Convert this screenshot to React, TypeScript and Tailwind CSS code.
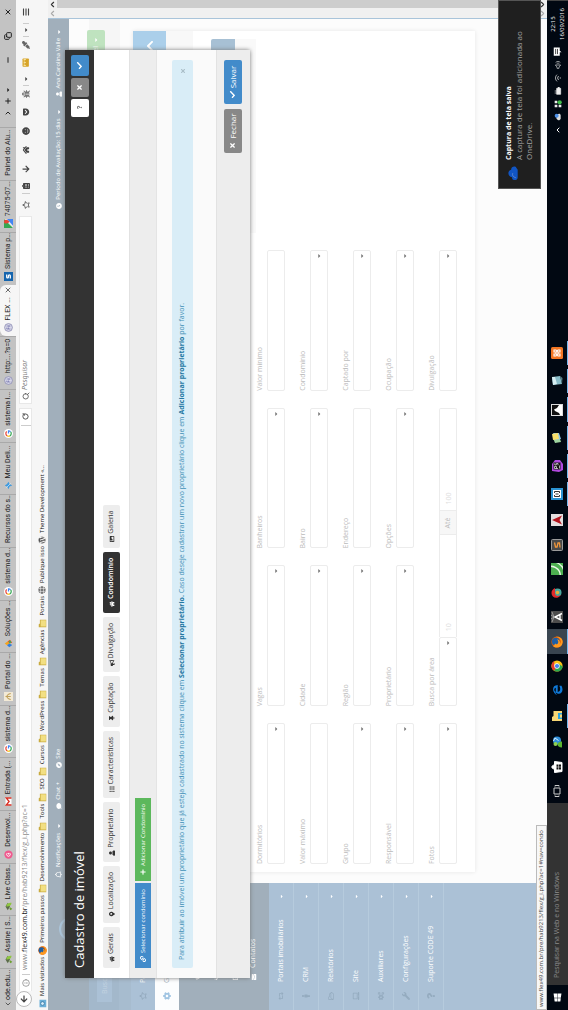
import type { ReactNode } from "react";
import {
  FaBullhorn, FaCaretDown, FaCheck, FaChevronUp, FaClock, FaCog, FaCogs, FaComment, FaCompass,
  FaEnvelope, FaExternalLinkAlt, FaGlobe, FaHome, FaImage, FaLaptop, FaLink, FaList,
  FaMapMarkerAlt, FaPlus, FaQuestion, FaRegBell, FaRegFolderOpen, FaRegStar, FaRetweet, FaThumbtack,
  FaTimes, FaUser, FaUsers, FaWindows, FaWordpress, FaWrench, FaEyeDropper, FaBug, FaGetPocket,
  FaSmile, FaArrowDown, FaArrowLeft, FaClipboardList, FaBars, FaMale,
} from "react-icons/fa";
import { ChevronDown, ChevronLeft, ChevronUp, Copy, Info, Minus, Plus, RotateCw, Search, X } from "lucide-react";

function Svg({ children, size = "size-3" }: { children: ReactNode; size?: string }) {
  return <svg viewBox="0 0 12 12" className={`${size} shrink-0`} aria-hidden="true">{children}</svg>;
}

const GoogleIcon = () => (
  <Svg size="size-[9px]">
    <circle cx="6" cy="6" r="6" fill="#fff" />
    <path d="M8.6 3.6A3.6 3.6 0 0 0 2.8 4.4" stroke="#ea4335" strokeWidth="1.6" fill="none" />
    <path d="M2.8 4.4a3.6 3.6 0 0 0 0 3.4" stroke="#fbbc05" strokeWidth="1.6" fill="none" />
    <path d="M2.8 7.8a3.6 3.6 0 0 0 5.6 .9" stroke="#34a853" strokeWidth="1.6" fill="none" />
    <path d="M6 6h3.6a3.6 3.6 0 0 1-1.2 2.7" stroke="#4285f4" strokeWidth="1.6" fill="none" />
  </Svg>
);
const GmailIcon = () => (
  <Svg size="size-[9px]">
    <rect x="0.5" y="2" width="11" height="8" fill="#fff" />
    <path d="M1.3 10V3l4.7 3.8L10.7 3v7" stroke="#d93025" strokeWidth="1.8" fill="none" />
  </Svg>
);
const LeafIcon = () => (
  <Svg size="size-[9px]">
    <path d="M1 5 6 2l5 3-5 3Z" fill="#5b6b4a" />
    <path d="M6 3c4 0 5 3 5 7-3 0-5-2-5-7Z" fill="#8ec63f" />
    <path d="M1 9c1-2 3-2 4-1l-2 3Z" fill="#6ba02f" />
  </Svg>
);
const PinkIcon = () => (
  <Svg size="size-[9px]">
    <circle cx="6" cy="6" r="5.5" fill="#ef5a8e" />
    <path d="M8 4.5a2.4 2.4 0 1 0 .2 2.6M6 6h2" stroke="#fff" strokeWidth="1.2" fill="none" />
  </Svg>
);
const PortalIcon = () => (
  <Svg size="size-[9px]">
    <rect width="12" height="12" fill="#f3ead6" />
    <path d="M2 9c1-4 2-5 4-5s3 1 4 5M6 2v7" stroke="#c2a25c" strokeWidth="1.4" fill="none" />
  </Svg>
);
const DropIcon = () => (
  <Svg size="size-[9px]">
    <path d="M6 1 9 5 6 7 3.6 4Z" fill="#f4a51c" />
    <path d="M3.6 4 6 7 4 11 1 7Z" fill="#2f7de0" />
    <path d="M9 5l2 3-4 3-1-4Z" fill="#e2532f" />
    <circle cx="8" cy="8" r="1.6" fill="#4bab4f" />
  </Svg>
);
const BirdIcon = () => (
  <Svg size="size-[9px]">
    <path d="M6 1 8 4l3 2-3 1.4L6 11 4.6 7.4 1 6l3.4-1.6Z" fill="#3f9be0" />
    <path d="M3 3l6 6" stroke="#d9eefc" strokeWidth="0.9" />
  </Svg>
);
const FlexIcon = () => (
  <Svg size="size-[9px]">
    <circle cx="6" cy="6" r="5.2" fill="#d9d9ea" stroke="#8585ae" />
    <path d="M4 3.6v5M4 3.8h2M4 6h2M8 3.4v5.2M6.6 6.6h2.2" stroke="#7777ad" strokeWidth="1" fill="none" />
  </Svg>
);
const SIcon = () => (
  <Svg size="size-[9px]">
    <rect width="12" height="12" fill="#1565ae" />
    <path d="M8.6 3.6H5.2a1.1 1.1 0 0 0 0 2.3h1.8a1.2 1.2 0 0 1 0 2.5H3.4" stroke="#fff" strokeWidth="1.7" fill="none" />
  </Svg>
);
const MapsIcon = () => (
  <Svg size="size-[9px]">
    <rect width="12" height="12" fill="#34a853" />
    <path d="M0 12 12 0v12Z" fill="#e8e8e8" />
    <path d="M3 12 12 4v8Z" fill="#4285f4" />
    <path d="M8.5 0a2.6 2.6 0 0 1 2.6 3C11 5 8.5 7.500 8.500 7.500S6 5 6 3a2.600 2.600 0 0 1 2.500-3Z" fill="#ea4335" />
  </Svg>
);
const ChromeIcon = ({ size = "size-[12px]" }: { size?: string }) => (
  <Svg size={size}>
    <circle cx="6" cy="6" r="5.600" fill="#fbc116" />
    <path d="M6 6 1.200 3.200A5.600 5.600 0 0 1 10.900 3.200H6Z" fill="#e33b2e" />
    <path d="M6 6 1.200 3.200A5.600 5.600 0 0 0 5.600 11.600L8.400 7.400Z" fill="#2da94f" />
    <circle cx="6" cy="6" r="2.700" fill="#fff" />
    <circle cx="6" cy="6" r="2.100" fill="#4583ef" />
  </Svg>
);
const FirefoxIcon = ({ size = "size-[12px]" }: { size?: string }) => (
  <Svg size={size}>
    <circle cx="6" cy="6" r="5.600" fill="#e66000" />
    <circle cx="6.400" cy="4.800" r="3.900" fill="#1d5fa6" />
    <path d="M.6 4.500C1.200 2.600 2 2 2 2s.2 1 .8 1.300c1 .1 1.500.5 1.800 1.200-.8.100-1.200 1-.6 1.900 1 1.500 3.800 1 4.400-.6C9 8.500 5.500 10 3.400 8.400c2.600 3 7.600 1 7.600-3.900 1.200 4-1.400 7.200-5 7.200A5.700 5.700 0 0 1 .6 4.500Z" fill="#ff9a1f" />
  </Svg>
);
const Folder = () => (
  <Svg size="size-[9px]">
    <path d="M1 1h4l1 1.500h5V11H1Z" fill="#c9ab3f" />
    <path d="M2 3.500h8.500v7H2Z" fill="#f2df83" />
  </Svg>
);

const tabs: { icon?: ReactNode; text: string; active?: boolean }[] = [
  { icon: <LeafIcon />, text: "Assine | S..." },
  { icon: <LeafIcon />, text: "Live Class..." },
  { icon: <PinkIcon />, text: "Desenvol..." },
  { icon: <GmailIcon />, text: "Entrada (..." },
  { icon: <GoogleIcon />, text: "sistema d..." },
  { icon: <PortalIcon />, text: "Portal do ..." },
  { icon: <DropIcon />, text: "Soluções ..." },
  { icon: <GoogleIcon />, text: "sistema d..." },
  { text: "Recursos do s..." },
  { icon: <BirdIcon />, text: "Meu Deli..." },
  { icon: <GoogleIcon />, text: "sistema i..." },
  { icon: <FlexIcon />, text: "http:...?s=0" },
  { icon: <FlexIcon />, text: "FLEX ...", active: true },
  { icon: <SIcon />, text: "Sistema p..." },
  { icon: <MapsIcon />, text: "74075-07..." },
  { text: "Painel do Alu..." },
];

function TabStrip() {
  return (
    <div className="flex h-4 shrink-0 items-stretch bg-[#c3c3c3] font-['Roboto','Noto_Sans',sans-serif] text-[7px] text-[#222]">
      <div className="flex w-[42px] shrink-0 items-center justify-between border-r border-[#a9a9a9] pr-1 pl-0.5">
        <button aria-label="Rolar abas para trás"><ChevronLeft className="size-2" /></button>
        <span className="whitespace-nowrap">ode.edu...</span>
      </div>
      {tabs.map((t, i) => (
        <button
          key={i}
          className={
            t.active
              ? "flex min-w-0 flex-1 items-center gap-[3px] overflow-hidden rounded-t-md bg-[#f6f6f6] pl-1 text-left whitespace-nowrap"
              : "flex min-w-0 flex-1 items-center gap-[3px] overflow-hidden border-r border-[#a9a9a9] pl-1 text-left whitespace-nowrap"
          }
        >
          {t.icon}
          <span>{t.text}</span>
          {t.active && <X className="mr-1 ml-auto size-2 shrink-0" strokeWidth={2} />}
        </button>
      ))}
      <div className="flex w-[127px] shrink-0 items-center">
        <div className="flex items-center gap-1 pl-2.5">
          <button aria-label="Rolar abas"><ChevronLeft className="size-2 rotate-180" strokeWidth={3} /></button>
          <button aria-label="Nova aba"><Plus className="size-2" strokeWidth={3} /></button>
          <button aria-label="Listar abas"><FaCaretDown className="size-1.5" /></button>
        </div>
        <div className="ml-auto flex items-center gap-4 pr-2">
          <button aria-label="Minimizar"><Minus className="size-2" strokeWidth={3} /></button>
          <button aria-label="Restaurar"><Copy className="size-2" strokeWidth={3} /></button>
          <button aria-label="Fechar janela"><X className="size-2" strokeWidth={3} /></button>
        </div>
      </div>
    </div>
  );
}

function NavBar() {
  return (
    <div className="flex h-4 shrink-0 items-center bg-[#f6f6f6] text-[7px] text-[#444]">
      <button aria-label="Voltar" className="z-10 ml-[3px] flex size-4 shrink-0 items-center justify-center rounded-full border border-[#bbb] bg-white">
        <FaArrowLeft className="size-2" />
      </button>
      <div className="mt-[3px] flex h-[13px] min-w-0 flex-1 items-center border border-l-0 border-[#e8e8e8] bg-white pl-1">
        <Info className="size-2 shrink-0 text-[#777]" />
        <div className="ml-1 h-2 border-l border-[#ccc]" />
        <div className="ml-1 flex-1 whitespace-nowrap text-[#8a8a8a]">
          www.<span className="text-[#222]">flex49.com.br</span>/pre/hab9213/flex/g_i.php?ac=1
        </div>
        <button aria-label="Recarregar" className="flex h-2.5 w-[17px] items-center justify-center border-l border-[#ccc]">
          <RotateCw className="size-[7px]" strokeWidth={3} />
        </button>
      </div>
      <label className="mt-[3px] ml-1 flex h-[13px] w-[188px] shrink-0 items-center gap-0.5 border border-[#e8e8e8] bg-white pl-[3px]">
        <Search className="size-2 shrink-0 text-[#555]" strokeWidth={2.5} />
        <input placeholder="Pesquisar" aria-label="Pesquisar" className="w-full min-w-0 bg-transparent italic outline-none placeholder:text-[#777]" />
      </label>
      <div className="flex w-[216px] shrink-0 items-center pt-[3px] pl-[7px]">
        <button aria-label="Favoritar" className="w-[15px]"><FaRegStar className="size-2" /></button>
        <button aria-label="Favoritos" className="flex w-[15px] justify-center border-l border-[#ccc]"><FaClipboardList className="size-2" /></button>
        <button aria-label="Downloads" className="flex w-[19px] justify-center"><FaArrowDown className="size-2" /></button>
        <button aria-label="Início" className="flex w-[19px] justify-center"><FaHome className="size-2" /></button>
        <button aria-label="Conversar" className="flex w-[19px] justify-center"><FaSmile className="size-2" /></button>
        <button aria-label="Pocket" className="flex w-[19px] justify-center"><FaGetPocket className="size-2" /></button>
        <button aria-label="Depurar" className="flex w-[17px] justify-center"><FaBug className="size-2 text-[#777]" /></button>
        <button aria-label="Opções de depuração" className="flex w-[13px] justify-center border-l border-[#ccc]"><FaCaretDown className="size-1.5" /></button>
        <button aria-label="Medir" className="flex w-[20px] justify-center">
          <Svg size="size-[9px]"><rect x="0.500" y="2" width="11" height="8.500" rx="1" fill="#d7a428" /><path d="M2 3.500v3M4 3.500v2M6 3.500v3M8 3.500v2M10 3.500v3" stroke="#fff3c0" /></Svg>
        </button>
        <button aria-label="Conta-gotas" className="flex w-[16px] justify-center"><FaEyeDropper className="size-2 text-[#666]" /></button>
        <button aria-label="Opções de cor" className="flex w-[14px] justify-center border-x border-[#ccc]"><FaCaretDown className="size-1.5" /></button>
        <button aria-label="Menu" className="flex w-[22px] justify-center"><FaBars className="size-2" /></button>
      </div>
    </div>
  );
}

const bookmarks: { icon: ReactNode; text: string }[] = [
  { icon: <Svg size="size-[9px]"><path d="M1 2h10v9H1Z" fill="#6cb0d8" /><circle cx="6" cy="6" r="2.500" fill="#d9eefa" stroke="#2f6f9c" /></Svg>, text: "Mais visitados" },
  { icon: <FirefoxIcon size="size-[9px]" />, text: "Primeiros passos" },
  { icon: <Folder />, text: "Desenvolvimento" },
  { icon: <Folder />, text: "Tools" },
  { icon: <Folder />, text: "SEO" },
  { icon: <Folder />, text: "Cursos" },
  { icon: <Folder />, text: "WordPress" },
  { icon: <Folder />, text: "Temas" },
  { icon: <Folder />, text: "Agências" },
  { icon: <Folder />, text: "Portais" },
  { icon: <FaGlobe className="size-[8px] text-[#777]" />, text: "Publique isso" },
  { icon: <FaWordpress className="size-[8px] text-[#555]" />, text: "Theme Development «..." },
];

function BookmarkBar() {
  return (
    <div className="flex h-4 shrink-0 items-center gap-[2px] bg-[#f6f6f6] pt-1 pl-0.5 text-[6px] font-medium text-[#111]">
      {bookmarks.map((b) => (
        <a key={b.text} href="#" className="flex items-center gap-[3px] whitespace-nowrap">{b.icon}{b.text}</a>
      ))}
    </div>
  );
}

const menu = [
  { icon: <FaRetweet />, text: "Portais imobiliários" },
  { icon: <FaMale />, text: "CRM" },
  { icon: <FaRegFolderOpen />, text: "Relatórios" },
  { icon: <FaLaptop />, text: "Site" },
  { icon: <FaCogs />, text: "Auxiliares" },
  { icon: <FaWrench />, text: "Configurações" },
  { icon: <FaQuestion />, text: "Suporte CODE 49" },
];

function Sidebar() {
  return (
    <nav className="flex w-[127px] shrink-0 flex-col bg-[#abc1d6] text-[7px] font-medium text-white">
      <div className="flex h-[41px] shrink-0 justify-center bg-[#a1afbb] pt-[11px] pl-[34px]">
        <div className="size-6 rounded-full border-2 border-[#abc4d9]" />
      </div>
      <div className="h-[30px] shrink-0 bg-[#a3b8cb] px-2 pt-2">
        <input placeholder="Busca" aria-label="Busca" className="h-[15px] w-full bg-[#abc1d6] px-2 font-normal placeholder:text-[#c3d3e1]" />
      </div>
      <div className="h-3 shrink-0 bg-[#a7bccf]" />
      <a href="#" className="flex h-6 shrink-0 items-center gap-[9px] pl-[10px]"><FaRegStar className="size-2 text-[#8fa5b9]" />Painel</a>
      <a href="#" className="flex h-6 shrink-0 items-center gap-[9px] bg-[#fcfdfe] pl-[10px] text-[#a1afbb]"><FaCog className="size-2 text-[#a0c4e2]" />Gestão</a>
      <div className="flex h-[90px] shrink-0 flex-col justify-end bg-[#a1afbb] pb-[6px] pl-[30px]">
        <a href="#" className="flex h-[19px] items-center gap-1"><FaHome className="size-[6px]" />Imóveis</a>
        <a href="#" className="flex h-[19px] items-center gap-1"><FaUsers className="size-[6px]" />Clientes</a>
        <a href="#" className="flex h-[19px] items-center gap-1"><FaExternalLinkAlt className="size-[6px]" />Agenda</a>
        <a href="#" className="flex h-[19px] items-center gap-[6px]"><FaEnvelope className="size-[6px]" />Contatos</a>
      </div>
      {menu.map((m) => (
        <a key={m.text} href="#" className="flex h-[25px] shrink-0 items-center border-b border-[#b6cbdd] pr-[11px] pl-[10px]">
          <span className="w-[18px] text-[8px] text-[#94abbf]">{m.icon}</span>
          <span className="flex-1 whitespace-nowrap">{m.text}</span>
          <FaCaretDown className="size-[5px]" />
        </a>
      ))}
    </nav>
  );
}

function Field({ id, label, select = true }: { id: string; label: string; select?: boolean }) {
  return (
    <div className="flex flex-col">
      <label htmlFor={id} className="h-[13px] leading-[11px] whitespace-nowrap">{label}</label>
      <div className="flex">{select ? <Picker id={id} /> : <input id={id} className="h-[18px] w-full min-w-0 rounded-xs border border-[#ececec] bg-white" />}</div>
    </div>
  );
}

function Picker({ id }: { id: string }) {
  return (
    <span className="relative block h-[18px] w-full">
      <select id={id} className="block h-full w-full appearance-none rounded-xs border border-[#ececec] bg-white"><option></option></select>
      <FaCaretDown className="pointer-events-none absolute top-[6px] right-[3px] size-[6px] text-[#777]" />
    </span>
  );
}

const fields: [string, boolean][] = [
  ["Dormitórios", true], ["Vagas", true], ["Banheiros", true], ["Valor mínimo", false],
  ["Valor máximo", false], ["Cidade", true], ["Bairro", true], ["Condomínio", true],
  ["Grupo", true], ["Região", true], ["Endereço", false], ["Captado por", true],
  ["Responsável", true], ["Proprietário", true], ["Opções", true], ["Ocupação", true],
  ["Fotos", true],
];

function Main() {
  return (
    <div className="flex min-w-0 flex-1 flex-col bg-[#fcfcfc] text-[7px]">
      <header className="flex h-[21px] shrink-0 items-center justify-between bg-[#a1afbb] pr-[10px] pl-[5px] text-[6px] font-medium text-white">
        <div className="flex items-center gap-[14px]">
          <a href="#" className="flex items-center gap-1"><FaRegBell className="size-[7px]" />Notificações <FaCaretDown className="size-[6px]" /></a>
          <a href="#" className="flex items-center gap-[3px]"><FaComment className="size-[6px]" />Chat +</a>
          <a href="#" className="flex items-center gap-[3px]"><FaCompass className="size-[6px]" />Site</a>
        </div>
        <div className="flex items-center gap-3">
          <a href="#" className="flex items-center gap-[3px]"><FaClock className="size-[6px]" />Período de Avaliação: 15 dias <FaCaretDown className="size-[6px]" /></a>
          <a href="#" className="flex items-center gap-[3px]"><FaUser className="size-[6px]" />Ana Carolina Valle <FaCaretDown className="size-[6px]" /></a>
        </div>
      </header>
      <div className="h-5 shrink-0" />
      <div className="flex h-[31px] shrink-0 items-start justify-end bg-[#f6f6f6] pr-[11px]">
        <button className="-mt-0.5 flex h-[18px] items-center gap-[3px] rounded-xs bg-[#bfe3bf] px-[7px] text-white">Painel <FaCaretDown className="size-[6px]" /></button>
      </div>
      <div className="h-[13px] shrink-0" />
      <section className="mr-3 ml-[11px] bg-white pb-[18px] shadow-[0_0_4px_#e6e6e6]">
        <div className="flex h-[33px] justify-end bg-[#fdfdfd]">
          <button aria-label="Recolher" className="flex w-9 items-center justify-end bg-[#abcfea] pr-[9px] text-white"><FaChevronUp className="size-3" /></button>
        </div>
        <div className="h-[27px] bg-[#f8f8f8]" />
        <div className="flex gap-[17px] px-2">
          <div className="grid min-w-0 flex-1 grid-cols-4 gap-x-[17px] gap-y-3 pt-[61px] text-[#bbb]">
            {fields.map(([label, select]) => <Field key={label} id={label} label={label} select={select} />)}
            <div className="col-span-2 flex flex-col">
              <label htmlFor="area" className="h-[13px] leading-[11px]">Busca por área</label>
              <div className="flex">
                <div className="w-[69px]"><Picker id="area" /></div>
                <input aria-label="Área mínima" placeholder="10" className="h-[18px] min-w-0 flex-1 border-y border-[#ececec] px-[6px] placeholder:text-[#dedede]" />
                <span className="flex h-[18px] w-[25px] items-center justify-center border border-[#ececec] bg-[#f7f7f7]">Até</span>
                <input aria-label="Área máxima" placeholder="100" className="h-[18px] min-w-0 flex-1 rounded-r-xs border border-l-0 border-[#ececec] px-[6px] placeholder:text-[#dedede]" />
              </div>
            </div>
            <Field id="Divulgacao" label="Divulgação" />
          </div>
          <div className="w-[194px] shrink-0 pt-[18px]">
            <button aria-label="Filtrar" className="ml-auto block h-6 w-12 rounded-t-xs bg-[#a7c0d4]" />
            <div className="h-[21px] bg-[#f9f9f9]" />
          </div>
        </div>
      </section>
    </div>
  );
}

const modalTabs = [
  { icon: <FaHome className="size-[6px]" />, text: "Gerais" },
  { icon: <FaMapMarkerAlt className="size-[6px]" />, text: "Localização" },
  { icon: <FaUser className="size-[6px]" />, text: "Proprietário" },
  { icon: <FaList className="size-[6px]" />, text: "Características" },
  { icon: <FaThumbtack className="size-[6px]" />, text: "Captação" },
  { icon: <FaBullhorn className="size-[6px]" />, text: "Divulgação" },
  { icon: <FaHome className="size-[6px]" />, text: "Condomínio", active: true },
  { icon: <FaImage className="size-[6px]" />, text: "Galeria" },
];

function Modal() {
  return (
    <div role="dialog" aria-label="Cadastro de imóvel" className="absolute top-[17px] right-[50px] left-8 rounded-xs bg-white text-[7px] shadow-[0_0_4px_#777]">
      <div className="flex h-[29px] items-center gap-0.5 bg-[#333] pr-[5px] pl-[10px]">
        <h1 className="flex-1 text-[13px] leading-none text-white">Cadastro de imóvel</h1>
        <button aria-label="Ajuda" className="flex size-[18px] items-center justify-center rounded-xs bg-white text-[#777]"><FaQuestion className="size-[5px]" /></button>
        <button aria-label="Fechar" className="flex h-[18px] w-[19px] items-center justify-center rounded-xs bg-[#888] text-white"><FaTimes className="size-[7px]" /></button>
        <button aria-label="Salvar" className="flex h-[18px] w-[21px] items-center justify-center rounded-xs bg-[#428bca] text-white"><FaCheck className="size-[7px]" /></button>
      </div>
      <div className="flex h-[35px] items-center gap-1 px-[10px]">
        {modalTabs.map((t) => (
          <button
            key={t.text}
            className={
              t.active
                ? "flex h-[17px] items-center gap-[2px] rounded-xs bg-[#333] px-[6px] font-semibold text-white"
                : "flex h-[17px] items-center gap-[2px] rounded-xs bg-[#ededed] px-[6px] text-[#333]"
            }
          >
            {t.icon}{t.text}
          </button>
        ))}
      </div>
      <div className="flex h-[27px] items-center gap-0.5 border-t border-[#e2e2e2] bg-[#ededed] px-[10px] text-[6px] font-medium text-white">
        <button className="flex h-4 items-center gap-[3px] bg-[#428bca] px-[6px]"><FaLink />Selecionar condomínio</button>
        <button className="flex h-4 items-center gap-[3px] bg-[#5cb85c] px-[6px]"><FaPlus />Adicionar Condomínio</button>
      </div>
      <div className="h-[60px] border-t border-[#e4e4e4] bg-[#fafafa] px-[10px] pt-[15px]">
        <div role="alert" className="flex h-[21px] items-center justify-between rounded-xs bg-[#d9edf7] px-2 whitespace-nowrap text-[#3f8fb6]">
          <p>
            Para atribuir ao imóvel um proprietário que já esteja cadastrado no sistema clique em <b className="text-[#2478a3]">Selecionar proprietário.</b> Caso deseje cadastrar um novo proprietário clique em <b className="text-[#2478a3]">Adicionar proprietário</b> por favor.
          </p>
          <button aria-label="Dispensar"><FaTimes className="size-[6px] text-[#a9bdc7]" /></button>
        </div>
      </div>
      <div className="flex h-[34px] items-center justify-end gap-[5px] border-t border-[#e2e2e2] bg-[#ededed] px-[10px] pb-0.5 text-[8px] text-white">
        <button className="flex h-[18px] w-11 items-center justify-center gap-[3px] rounded-xs bg-[#888]"><FaTimes className="size-[7px]" />Fechar</button>
        <button className="flex h-[18px] w-11 items-center justify-center gap-[3px] rounded-xs bg-[#428bca]"><FaCheck className="size-[7px]" />Salvar</button>
      </div>
    </div>
  );
}

function Scrollbar({ thumb = false }: { thumb?: boolean }) {
  return (
    <div className="flex w-[9px] shrink-0 flex-col items-center bg-[#f0f0f0]">
      <ChevronUp className={thumb ? "size-[9px] text-[#333]" : "size-[9px] text-[#aaa]"} strokeWidth={3} />
      <div className={thumb ? "w-2 flex-1 bg-[#cdcdcd]" : "flex-1"} />
      <ChevronDown className={thumb ? "size-[9px] text-[#333]" : "size-[9px] text-[#aaa]"} strokeWidth={3} />
    </div>
  );
}

const apps: { name: string; icon: ReactNode; open?: boolean; current?: boolean }[] = [
  { name: "Visão de tarefas", icon: <Svg><path d="M3 3h6v6H3ZM1.500 4H.5v4h1M10.500 4h1v4h-1" stroke="#ccc" fill="none" /></Svg> },
  { name: "Loja", icon: <Svg><path d="M.5 3.500h11L10.500 11h-9ZM4 3.500C4 0 8 0 8 3.500" fill="#fff" stroke="#fff" /><path d="M3.600 5.500h2.100v2H3.600ZM6.300 5.500h2.100v2H6.300ZM3.600 8h2.100v2H3.600ZM6.300 8h2.100v2H6.300Z" fill="#111" /></Svg> },
  { name: "Messenger", icon: <Svg><circle cx="7.500" cy="6" r="4" fill="#2f8fdb" /><circle cx="4" cy="4.500" r="2" fill="#8fd14f" /><path d="M.5 11c0-6 6-6 6 0Z" fill="#5cb531" /><path d="M7 2.500 10 4 7.500 7.500" stroke="#d9f0ff" fill="none" /></Svg> },
  { name: "Explorador", open: true, icon: <Svg><path d="M1 1h4l1 1.500h5V11H1Z" fill="#f8d775" /><path d="M3 11V7h6v4H7.500V9h-3v2Z" fill="#2ba3e0" /></Svg> },
  { name: "Edge", icon: <Svg><path d="M1 6.200C2 1.600 10.800-.4 11 6.700H4c.2 3 4.200 3 6.300 1.600v2.200C5.500 13 1.400 10.500 2.300 7c.4-1.700 1.700-2.600 1.700-2.600S2 4.600 1 6.200Zm3-1.400h4.300C8.100 2.700 4.800 2.800 4 4.800Z" fill="#0f78d7" /></Svg> },
  { name: "Chrome", icon: <ChromeIcon /> },
  { name: "Firefox", open: true, current: true, icon: <FirefoxIcon /> },
  { name: "Editor de fontes", icon: <Svg><rect width="12" height="12" fill="#4c4c4c" /><path d="M2.500 11 6 4l3.500 7M4 9h4" stroke="#fff" strokeWidth="1.400" fill="none" /><path d="M6 3 1 1M6 3 4 0M6 3l2-3M6 3l5-2" stroke="#bbb" strokeWidth=".7" /></Svg> },
  { name: "Dragon", icon: <Svg><circle cx="6.500" cy="6.500" r="4" fill="#4aa8a0" /><path d="M6 .5C2 .5.5 4 1.500 7l3 4C2 7 3 4 6 4h5C10 1.500 8 .5 6 .5Z" fill="#e02b2b" /><circle cx="6.500" cy="6.500" r="1.800" fill="#e8b23a" /></Svg> },
  { name: "Camtasia", icon: <Svg><rect width="12" height="12" fill="#4caf50" /><path d="M0 8.500C4 8.500 7 6 8 0h1.500C9 6 5 10 0 10ZM5 12c3-1 6-4 7-7v3L8.500 12Z" fill="#e8f6e4" /></Svg> },
  { name: "Sublime Text", icon: <Svg><rect x=".5" y=".5" width="11" height="11" rx="1" fill="#4a4a4a" stroke="#9b9b9b" /><path d="M8.500 3.500 4 4.500v1.500l4 1v1.500L3.500 9" stroke="#f2973b" strokeWidth="1.300" fill="none" /></Svg> },
  { name: "AutoCAD", icon: <Svg><rect width="12" height="12" fill="#e4dede" /><path d="M6 1 10.500 11 6 8.500 1.500 11Z" fill="#b3141d" /></Svg> },
  { name: "Brackets", open: true, icon: <Svg><rect width="12" height="12" fill="#2a93d3" /><rect x="2" y="2" width="8" height="8" fill="#fff" /><path d="M5 3.500H3.500v5H5M7 3.500h1.500v5H7M6 4.500v3" stroke="#333" fill="none" /></Svg> },
  { name: "PhpStorm", open: true, icon: <Svg><path d="M1 1h7l4 3v5l-4 3H2L0 8Z" fill="#b149e0" /><rect x="2.500" y="2.500" width="7" height="7" fill="#141414" /><path d="M3.500 7V3.500h2v2h-2M8.700 3.800H7v1.500h1.500V7H6.800M3.500 8.500h3" stroke="#eee" strokeWidth=".7" fill="none" /></Svg> },
  { name: "Notas", open: true, icon: <Svg><path d="M1 4l5-2 2 6-6 2Z" fill="#9fd5a0" /><path d="M4 5l7-3v6l-6 2Z" fill="#8fc3e8" /><path d="M4 2l6-1 1 6-6 1Z" fill="#f9e06a" /></Svg> },
  { name: "Inkscape", open: true, icon: <Svg><rect x=".5" y=".5" width="11" height="11" fill="#111" stroke="#ddd" /><path d="M1 11V9l2-1 2-4 1.500-1L8 6l3 2v3Z" fill="#fff" /></Svg> },
  { name: "Bloco de notas", open: true, icon: <Svg><path d="M2 2 10 1l1 8-8 2Z" fill="#88bcc8" /><path d="M2 2 10 1v3L3 6Z" fill="#d6edf1" /><path d="M3 11l8-2-2 2.500Z" fill="#557f89" /></Svg> },
  { name: "XAMPP", open: true, icon: <Svg><rect width="12" height="12" rx="1.500" fill="#f37623" /><path d="M3 3h2v2h2V3h2v2L7.500 6 9 7v2H7V7H5v2H3V7l1.500-1L3 5Z" stroke="#fff" strokeWidth="1.100" fill="none" /></Svg> },
];

function Taskbar() {
  return (
    <footer className="flex h-[21px] shrink-0 items-stretch bg-[#010812] text-[7px] text-white">
      <button aria-label="Iniciar" className="flex w-[25px] items-center justify-center"><FaWindows className="size-[9px]" /></button>
      <input aria-label="Pesquisar" placeholder="Pesquisar na Web e no Windows" className="w-[182px] bg-[#333] px-[7px] text-[7px] placeholder:text-[#8c8c8c]" />
      <div className="flex w-[464px]">
        {apps.map((a) => (
          <button
            key={a.name}
            aria-label={a.name}
            className={
              a.current
                ? "flex min-w-0 flex-1 items-center justify-center border-b border-[#76b9ed] bg-[#394550]"
                : a.open
                  ? "mx-[2px] flex min-w-0 flex-1 items-center justify-center border-b border-[#76b9ed]"
                  : "flex min-w-0 flex-1 items-center justify-center border-b border-transparent"
            }
          >
            {a.icon}
          </button>
        ))}
      </div>
      <div className="ml-auto flex items-center gap-[5px]">
        <ChevronUp className="size-2" strokeWidth={3} />
        <Svg size="size-2"><path d="M1 8c0-4 4-6 6-3 4-1 5 4 2 5H3Z" fill="#ddd" /><circle cx="8" cy="4" r="3" fill="#4b8fe8" /></Svg>
        <Svg size="size-2"><path d="M1 1h4v4H1ZM7 1h4v4H7ZM1 7h4v4H1Z" fill="#eee" /><circle cx="8.500" cy="8.500" r="3.200" fill="#3fbf4a" /></Svg>
        <Svg size="size-2"><path d="M1 4h9v6H1ZM10 6h1.500v2H10ZM3 1v3M6 1v3" fill="#eee" stroke="#eee" /></Svg>
        <Svg size="size-2"><path d="M1 4.500c3-3 7-3 10 0M3 7c2-2 4-2 6 0M5 9.500c.6-.6 1.400-.6 2 0" stroke="#ddd" strokeWidth="1.200" fill="none" /></Svg>
        <Svg size="size-2"><path d="M1 4.500h2L6 2v8L3 7.500H1ZM8 4c1 1 1 3 0 4M9.800 2.500c2 2 2 5 0 7" stroke="#ddd" fill="none" /></Svg>
        <Svg size="size-[9px]"><path d="M.5 1h11v8H7l-2 2.500V9H.5Z" fill="#fff" /><path d="M2.500 3.500h7M2.500 6h7" stroke="#111" /></Svg>
        <time className="w-[36px] text-center text-[6px] leading-[9px]">22:15<br />16/09/2016</time>
        <div className="h-[21px] border-l border-[#444]" />
      </div>
    </footer>
  );
}

function Toast() {
  return (
    <div role="status" className="absolute right-0 bottom-[6px] flex h-[43px] w-[189px] gap-[6px] border border-[#555] bg-[#1f1f1f] pt-1 pl-[7px] text-[8px] leading-[10px]">
      <svg viewBox="0 0 16 12" className="mt-1 h-3 w-[15px] shrink-0" aria-hidden="true">
        <path d="M1 8C1 5 3 5 4 5c1-5 7-5 8-1 3 0 4 3 3 5l-3 2H4C2 11 1 10 1 8Z" fill="#1155c4" />
        <path d="M3.500 9c1-4 4-4 5-3" stroke="#6e93cf" strokeWidth=".8" fill="none" />
      </svg>
      <div>
        <strong className="block text-[7px] leading-[11px] text-white">Captura de tela salva</strong>
        <p className="text-[#a3a3a3]">A captura de tela foi adicionada ao<br />OneDrive.</p>
      </div>
    </div>
  );
}

export default function App() {
  return (
    <div className="h-screen w-screen overflow-hidden">
      <div className="flex h-[100vw] w-[100vh] origin-top-left translate-y-[100vh] -rotate-90 flex-col overflow-hidden bg-white font-['Open_Sans','Noto_Sans',sans-serif]">
        <TabStrip />
        <NavBar />
        <BookmarkBar />
        <div className="relative flex min-h-0 flex-1 overflow-hidden">
          <div className="flex min-w-0 flex-1 overflow-hidden border-r border-[#a9c4da]">
            <Sidebar />
            <Main />
          </div>
          <Scrollbar />
          <Scrollbar thumb />
          <Modal />
          <div className="absolute bottom-0 left-0 flex h-[11px] items-center border border-[#bbb] bg-[#f7f7f7] pr-1 pl-0.5 text-[6px] whitespace-nowrap text-[#444]">
            www.flex49.com.br/pre/hab9213/flex/g_i.php?ac=1#nav=condo
          </div>
          <Toast />
        </div>
        <Taskbar />
      </div>
    </div>
  );
}
